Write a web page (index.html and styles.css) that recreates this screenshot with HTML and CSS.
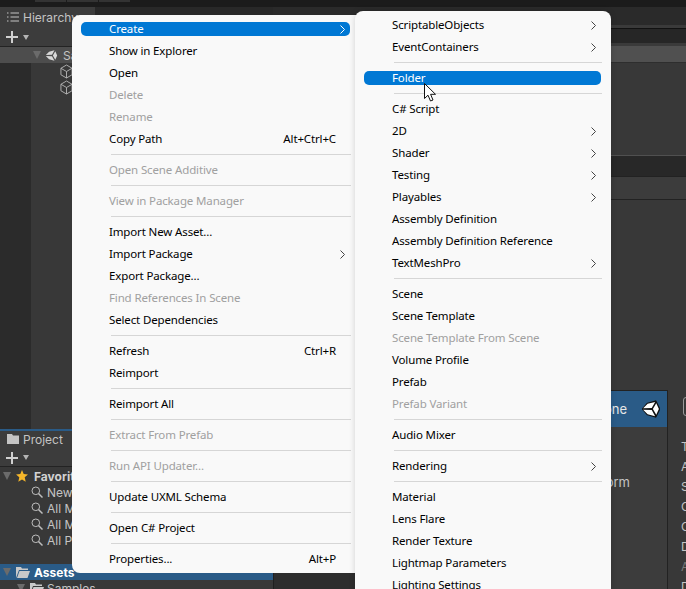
FILE: index.html
```html
<!DOCTYPE html>
<html>
<head>
    <title>Project context menu</title>
    <link rel="stylesheet" href="styles.css">
</head>
<body>
    <div class="editor">
        <div class="topbar">
            <span class="top-btn"></span>
            <span class="top-btn"></span>
            <span class="top-btn"></span>
        </div>

        <div class="workspace">
            <div class="left-col">
                <div class="panel hierarchy">
                    <div class="tab-strip">
                        <div class="tab">
                            <svg class="tab-icon" viewBox="0 0 12 10"><path d="M0 1h1.500M0 5h1.500M0 9h1.500M3.500 1H12M3.500 5H12M3.500 9H12" stroke="#c4c4c4" fill="none"/></svg>
                            <span>Hierarchy</span>
                        </div>
                    </div>
                    <div class="panel-tools">
                        <svg class="plus" viewBox="0 0 12 12"><path d="M6 0v12M0 6h12" stroke="#d0d0d0" stroke-width="2" fill="none"/></svg>
                        <span class="drop"></span>
                    </div>
                    <div class="tree">
                        <div class="tree-row scene-row">
                            <span class="tri"></span>
                            <svg class="unity-small" viewBox="0 0 24 24"><path fill="#d8d8d8" d="M1.500 11 7.500 5 17.500 2.500 13 10.700zM1.500 13 13 13.300 17.500 21.500 7.500 19zM14.500 12 19 4.300 22.500 12 19 19.700z"/></svg>
                            <span class="scene-name">SampleScene</span>
                        </div>
                        <div class="tree-row cube-row">
                            <svg class="cube" viewBox="0 0 14 16"><path d="M7 1 13 4.500V11.500L7 15 1 11.500V4.500zM1 4.500 7 8 13 4.500M7 8V15" stroke="#b4b4b4" fill="none"/></svg>
                        </div>
                        <div class="tree-row cube-row">
                            <svg class="cube" viewBox="0 0 14 16"><path d="M7 1 13 4.500V11.500L7 15 1 11.500V4.500zM1 4.500 7 8 13 4.500M7 8V15" stroke="#b4b4b4" fill="none"/></svg>
                        </div>
                    </div>
                </div>

                <div class="panel project">
                    <div class="tab-strip">
                        <div class="tab">
                            <svg class="tab-icon folder-tab" viewBox="0 0 12 10"><path fill="#c4c4c4" d="M0 0h5l1 1.500h6V10H0z"/></svg>
                            <span>Project</span>
                        </div>
                    </div>
                    <div class="panel-tools">
                        <svg class="plus" viewBox="0 0 12 12"><path d="M6 0v12M0 6h12" stroke="#d0d0d0" stroke-width="2" fill="none"/></svg>
                        <span class="drop"></span>
                    </div>
                    <div class="tree project-tree">
                        <div class="tree-row">
                            <span class="tri"></span>
                            <svg class="star" viewBox="0 0 12 12"><path fill="#f5b62a" d="M6 0 7.700 4.100 12 4.500 8.700 7.300 9.700 11.700 6 9.400 2.300 11.700 3.300 7.300 0 4.500 4.300 4.100z"/></svg>
                            <b>Favorites</b>
                        </div>
                        <div class="tree-row search-row">
                            <svg class="lens" viewBox="0 0 12 12"><path d="M7.500 7.500 11.500 11.500" stroke="#bdbdbd" stroke-width="1.500"/><circle cx="4.800" cy="4.800" r="3.800" stroke="#bdbdbd" fill="none"/></svg>
                            <span>New Scenes</span>
                        </div>
                        <div class="tree-row search-row">
                            <svg class="lens" viewBox="0 0 12 12"><path d="M7.500 7.500 11.500 11.500" stroke="#bdbdbd" stroke-width="1.500"/><circle cx="4.800" cy="4.800" r="3.800" stroke="#bdbdbd" fill="none"/></svg>
                            <span>All Materials</span>
                        </div>
                        <div class="tree-row search-row">
                            <svg class="lens" viewBox="0 0 12 12"><path d="M7.500 7.500 11.500 11.500" stroke="#bdbdbd" stroke-width="1.500"/><circle cx="4.800" cy="4.800" r="3.800" stroke="#bdbdbd" fill="none"/></svg>
                            <span>All Models</span>
                        </div>
                        <div class="tree-row search-row">
                            <svg class="lens" viewBox="0 0 12 12"><path d="M7.500 7.500 11.500 11.500" stroke="#bdbdbd" stroke-width="1.500"/><circle cx="4.800" cy="4.800" r="3.800" stroke="#bdbdbd" fill="none"/></svg>
                            <span>All Prefabs</span>
                        </div>
                        <div class="tree-row assets-row">
                            <span class="tri"></span>
                            <svg class="folder" viewBox="0 0 14 11"><path fill="#c9c9c9" d="M0 0h5l1 1.500h6V3H3L0 11zM3.500 4H14l-2.500 7H1z"/></svg>
                            <b>Assets</b>
                        </div>
                        <div class="tree-row samples-row">
                            <span class="tri"></span>
                            <svg class="folder" viewBox="0 0 14 11"><path fill="#c9c9c9" d="M0 0h5l1 1.500h6V3H3L0 11zM3.500 4H14l-2.500 7H1z"/></svg>
                            <span>Samples</span>
                        </div>
                    </div>
                </div>
            </div>

            <div class="right-col">
                <div class="strip strip-a"></div>
                <div class="strip strip-b"></div>
                <div class="strip strip-c"></div>
                <div class="strip strip-d"></div>
                <div class="strip strip-e"></div>
                <div class="strip strip-f"></div>
                <div class="strip strip-g"></div>
                <div class="lower">
                    <div class="lower-left"></div>
                    <div class="lower-right">
                        <div class="platforms">
                            <div class="platform-head">
                                <span>Standalone</span>
                                <svg class="unity-logo" viewBox="0 0 24 24"><path fill="#111" stroke="#111" stroke-width="3" stroke-linejoin="round" d="M1.500 12 7.500 5 18 2 23 12 18 22 7.500 19z"/><path fill="#fff" d="M1.500 11 7.500 5 17.500 2.500 13 10.700zM1.500 13 13 13.300 17.500 21.500 7.500 19zM14.500 12 19 4.300 22.500 12 19 19.700z"/></svg>
                            </div>
                            <div class="platform-item"><span>Dedicated Platform</span></div>
                        </div>
                        <div class="details">
                            <div class="details-box"></div>
                            <div class="details-list">
                                <div>Target Platform</div>
                                <div>Architecture</div>
                                <div>Server Build</div>
                                <div>Copy PDB files</div>
                                <div>Create Solution</div>
                                <div>Development Build</div>
                                <div class="dim">Autoconnect Profiler</div>
                                <div>Deep Profiling</div>
                            </div>
                        </div>
                    </div>
                </div>
            </div>
        </div>

        <div class="menu main-menu">
            <div class="item active"><span class="label">Create</span><svg class="chev" viewBox="0 0 5 9"><path d="M.5.500 4.500 4.500.5 8.500" stroke="#fff" fill="none"/></svg></div>
            <div class="item"><span class="label">Show in Explorer</span></div>
            <div class="item"><span class="label">Open</span></div>
            <div class="item off"><span class="label">Delete</span></div>
            <div class="item off"><span class="label">Rename</span></div>
            <div class="item"><span class="label">Copy Path</span><span class="keys">Alt+Ctrl+C</span></div>
            <div class="sep"></div>
            <div class="item off"><span class="label">Open Scene Additive</span></div>
            <div class="sep"></div>
            <div class="item off"><span class="label">View in Package Manager</span></div>
            <div class="sep"></div>
            <div class="item"><span class="label">Import New Asset...</span></div>
            <div class="item"><span class="label">Import Package</span><svg class="chev" viewBox="0 0 5 9"><path d="M.5.500 4.500 4.500.5 8.500" stroke="#444" fill="none"/></svg></div>
            <div class="item"><span class="label">Export Package...</span></div>
            <div class="item off"><span class="label">Find References In Scene</span></div>
            <div class="item"><span class="label">Select Dependencies</span></div>
            <div class="sep"></div>
            <div class="item"><span class="label">Refresh</span><span class="keys">Ctrl+R</span></div>
            <div class="item"><span class="label">Reimport</span></div>
            <div class="sep"></div>
            <div class="item"><span class="label">Reimport All</span></div>
            <div class="sep"></div>
            <div class="item off"><span class="label">Extract From Prefab</span></div>
            <div class="sep"></div>
            <div class="item off"><span class="label">Run API Updater...</span></div>
            <div class="sep"></div>
            <div class="item"><span class="label">Update UXML Schema</span></div>
            <div class="sep"></div>
            <div class="item"><span class="label">Open C# Project</span></div>
            <div class="sep"></div>
            <div class="item"><span class="label">Properties...</span><span class="keys">Alt+P</span></div>
        </div>

        <div class="menu sub-menu">
            <div class="item"><span class="label">ScriptableObjects</span><svg class="chev" viewBox="0 0 5 9"><path d="M.5.500 4.500 4.500.5 8.500" stroke="#444" fill="none"/></svg></div>
            <div class="item"><span class="label">EventContainers</span><svg class="chev" viewBox="0 0 5 9"><path d="M.5.500 4.500 4.500.5 8.500" stroke="#444" fill="none"/></svg></div>
            <div class="sep"></div>
            <div class="item active"><span class="label">Folder</span></div>
            <div class="sep"></div>
            <div class="item"><span class="label">C# Script</span></div>
            <div class="item"><span class="label">2D</span><svg class="chev" viewBox="0 0 5 9"><path d="M.5.500 4.500 4.500.5 8.500" stroke="#444" fill="none"/></svg></div>
            <div class="item"><span class="label">Shader</span><svg class="chev" viewBox="0 0 5 9"><path d="M.5.500 4.500 4.500.5 8.500" stroke="#444" fill="none"/></svg></div>
            <div class="item"><span class="label">Testing</span><svg class="chev" viewBox="0 0 5 9"><path d="M.5.500 4.500 4.500.5 8.500" stroke="#444" fill="none"/></svg></div>
            <div class="item"><span class="label">Playables</span><svg class="chev" viewBox="0 0 5 9"><path d="M.5.500 4.500 4.500.5 8.500" stroke="#444" fill="none"/></svg></div>
            <div class="item"><span class="label">Assembly Definition</span></div>
            <div class="item"><span class="label">Assembly Definition Reference</span></div>
            <div class="item"><span class="label">TextMeshPro</span><svg class="chev" viewBox="0 0 5 9"><path d="M.5.500 4.500 4.500.5 8.500" stroke="#444" fill="none"/></svg></div>
            <div class="sep"></div>
            <div class="item"><span class="label">Scene</span></div>
            <div class="item"><span class="label">Scene Template</span></div>
            <div class="item off"><span class="label">Scene Template From Scene</span></div>
            <div class="item"><span class="label">Volume Profile</span></div>
            <div class="item"><span class="label">Prefab</span></div>
            <div class="item off"><span class="label">Prefab Variant</span></div>
            <div class="sep"></div>
            <div class="item"><span class="label">Audio Mixer</span></div>
            <div class="sep"></div>
            <div class="item"><span class="label">Rendering</span><svg class="chev" viewBox="0 0 5 9"><path d="M.5.500 4.500 4.500.5 8.500" stroke="#444" fill="none"/></svg></div>
            <div class="sep"></div>
            <div class="item"><span class="label">Material</span></div>
            <div class="item"><span class="label">Lens Flare</span></div>
            <div class="item"><span class="label">Render Texture</span></div>
            <div class="item"><span class="label">Lightmap Parameters</span></div>
            <div class="item"><span class="label">Lighting Settings</span></div>
        </div>

        <svg class="cursor" viewBox="0 0 13 19"><path d="M.5.500V15.500L4 12.200 6.500 18 9 17 6.600 11.300H11.500z" fill="#fff" stroke="#111" stroke-linejoin="round"/></svg>
    </div>
</body>
</html>
```

FILE: styles.css
```css
body {
    margin: 0;
    background: #383838;
    font-family: "Inter", "Liberation Sans", sans-serif;
    font-size: 12px;
    color: #c4c4c4;
}

.editor {
    position: relative;
    width: 686px;
    height: 589px;
    overflow: hidden;
    display: flex;
    flex-direction: column;
}

.topbar {
    height: 7px;
    background: #1b1b1b;
    display: flex;
    gap: 1px;
    padding-left: 35px;
}

.top-btn {
    width: 31px;
    height: 2px;
    background: #333;
}

.workspace {
    flex: 1;
    display: flex;
    min-height: 0;
}

/* left column: hierarchy + project */
.left-col {
    width: 273px;
    display: flex;
    flex-direction: column;
}

.panel {
    display: flex;
    flex-direction: column;
    background: #383838;
}

.hierarchy {
    height: 422px;
}

.project {
    flex: 1;
    min-height: 0;
    border-top: 2px solid #2a5b87;
}

.tab-strip {
    height: 23px;
    background: #282828;
    display: flex;
}

.project .tab-strip {
    height: 18px;
}

.tab {
    width: 95px;
    box-sizing: border-box;
    background: #3c3c3c;
    display: flex;
    align-items: center;
    gap: 4px;
    padding-left: 7px;
    white-space: nowrap;
}

.project .tab {
    padding-bottom: 2px;
}

.hierarchy .tab {
    align-items: flex-start;
    padding-top: 3px;
}

.tab-icon {
    width: 12px;
    height: 10px;
}

.hierarchy .tab-icon {
    margin-top: 2px;
}

.panel-tools {
    height: 16px;
    background: #3c3c3c;
    border-bottom: 1px solid #232323;
    display: flex;
    align-items: center;
    gap: 5px;
    padding-left: 6px;
}

.hierarchy .panel-tools {
    height: 14px;
    padding-bottom: 2px;
}

.project .panel-tools {
    height: 17px;
}

.plus {
    width: 12px;
    height: 12px;
}

.drop {
    width: 0;
    height: 0;
    border-left: 3.5px solid transparent;
    border-right: 3.5px solid transparent;
    border-top: 5px solid #b4b4b4;
}

.tree {
    flex: 1;
    min-height: 0;
    overflow: hidden;
    background: linear-gradient(to right, #2b2b2b 31px, #383838 31px);
}

.project-tree {
    padding-top: 1px;
    background: #383838;
}

.tree-row {
    height: 16px;
    display: flex;
    align-items: center;
    white-space: nowrap;
}

.tree-row b {
    font-weight: 700;
    color: #d2d2d2;
}

.tri {
    width: 0;
    height: 0;
    border-left: 4.500px solid transparent;
    border-right: 4.500px solid transparent;
    border-top: 8px solid #6b6b6b;
}

.scene-row {
    background: #4d4d4d;
    padding-left: 33px;
    gap: 4px;
}

.unity-small {
    width: 13px;
    height: 13px;
}

.scene-name {
    margin-left: 1px;
}

.cube-row {
    padding-left: 60px;
}

.cube {
    width: 13px;
    height: 15px;
}

.project-tree .tree-row > .tri {
    margin-left: 3px;
}

.project-tree .tree-row > b {
    margin-left: 6px;
}

.star {
    width: 12px;
    height: 12px;
    margin-left: 5px;
}

.search-row {
    padding-left: 31px;
    gap: 4px;
}

.lens {
    width: 12px;
    height: 12px;
}

.assets-row {
    margin-top: 16px;
    background: #2a5b87;
}

.project-tree .assets-row b {
    margin-left: 4px;
    color: #fff;
}

.folder {
    width: 14px;
    height: 11px;
    margin-left: 5px;
}

.samples-row {
    padding-left: 14px;
}

.samples-row span:last-child {
    margin-left: 3px;
}

/* right column: stacked strips behind the menus */
.right-col {
    flex: 1;
    min-width: 0;
    display: flex;
    flex-direction: column;
}

.strip-a {
    height: 18px;
    background: #2a2a2a;
}

.strip-b {
    height: 3px;
    background: #3a3a3a;
    border-bottom: 1px solid #111;
}

.strip-c {
    height: 14px;
    background: #262626;
    border-bottom: 3px solid #3a3a3a;
}

.strip-d {
    height: 16px;
    background: #505050;
    border-bottom: 1px solid #2e2e2e;
}

.strip-e {
    height: 92px;
    background: #383838;
    border-bottom: 1px solid #505050;
}

.strip-f {
    height: 20px;
    background: #282828;
    border-bottom: 1px solid #222;
}

.strip-g {
    height: 22px;
    background: #3c3c3c;
    border-bottom: 1px solid #222;
}

.lower {
    flex: 1;
    min-height: 0;
    display: flex;
}

.lower-left {
    width: 338px;
    background: #2d2d2d;
    border-left: 1px solid #1f1f1f;
    box-sizing: border-box;
}

.lower-right {
    flex: 1;
    display: flex;
    min-width: 0;
    background: #383838;
    white-space: nowrap;
}

.platforms {
    width: 56px;
    margin-top: 190px;
    border-top: 1px solid #222;
    border-right: 1px solid #222;
    background: #3c3c3c;
}

.platform-head {
    height: 36px;
    background: #2a5b87;
    color: #e6e6e6;
    display: flex;
    align-items: center;
    justify-content: flex-end;
    gap: 15px;
    padding-right: 7px;
    font-size: 13px;
}

.unity-logo {
    width: 18px;
    height: 18px;
    flex: none;
}

.platform-item {
    display: flex;
    justify-content: flex-end;
    margin-top: 46px;
    padding-right: 37px;
    line-height: 18px;
    font-size: 13px;
}

.details {
    flex: 1;
    min-width: 0;
    padding-left: 13px;
    overflow: hidden;
}

.details-box {
    width: 20px;
    height: 17px;
    margin-top: 197px;
    margin-left: 2px;
    border: 1px solid #9a9a9a;
    border-radius: 3px;
}

.details-list {
    margin-top: 21px;
    line-height: 20px;
}

.details-list .dim {
    color: #7a7a7a;
}

/* context menus */
.menu {
    position: absolute;
    box-sizing: border-box;
    background: #f9f9f9;
    border-radius: 8px;
    padding: 7px 10px 7px 9px;
    display: flex;
    flex-direction: column;
    gap: 8px;
    font-family: "Noto Sans", "Liberation Sans", sans-serif;
    font-size: 11.5px;
    letter-spacing: -0.14px;
    color: #000;
}

.main-menu {
    left: 72px;
    top: 15px;
    width: 288px;
    border-radius: 8px 0 0 8px;
}

.sub-menu {
    left: 355px;
    top: 11px;
    width: 256px;
    box-shadow: 0 0 6px rgba(0, 0, 0, 0.16);
}

.item {
    flex: none;
    height: 14px;
    line-height: 14px;
    padding: 0 5px 0 28px;
    border-radius: 5px;
    display: flex;
    align-items: center;
    white-space: nowrap;
}

.item.active {
    background: #0078d4;
    color: #fff;
}

.item.off {
    color: #a0a0a0;
}

.label {
    flex: 1;
}

.keys {
    margin-right: 9px;
}

.chev {
    width: 5px;
    height: 9px;
}

.sep {
    flex: none;
    height: 1px;
    margin: 0 -1px 0 30px;
    background: #d6d6d6;
}

.cursor {
    position: absolute;
    left: 424px;
    top: 83px;
    width: 13px;
    height: 19px;
}
```
